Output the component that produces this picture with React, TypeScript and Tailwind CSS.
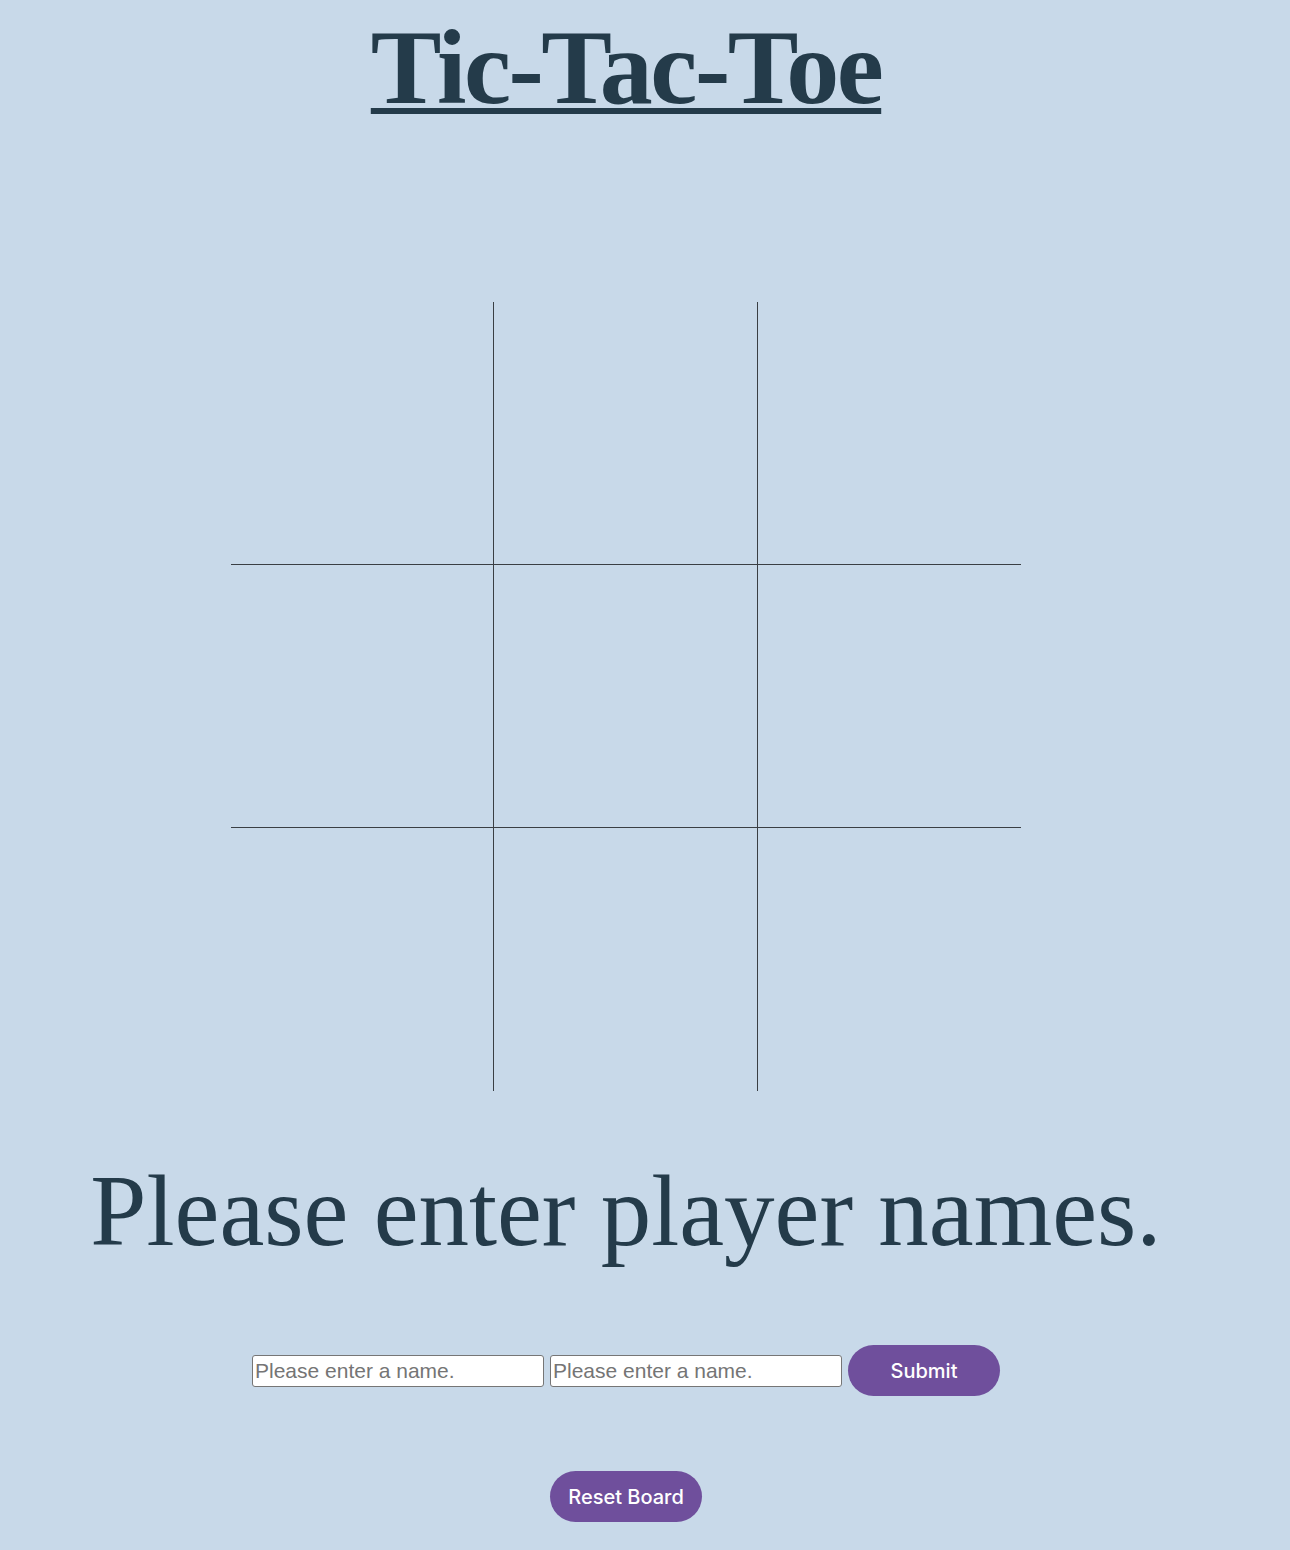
import React, { useState } from 'react';

export default function App() {
  const [board, setBoard] = useState<string[]>(Array(9).fill(''));
  const [names, setNames] = useState(['', '']);

  const cellBorder = (i: number) => {
    const col = i % 3;
    const row = Math.floor(i / 3);
    return `${col < 2 ? 'border-r' : ''} ${row < 2 ? 'border-b' : ''}`;
  };

  return (
    <div className="min-h-screen bg-[#c8d9e9] pr-[38px] flex flex-col items-center text-[#243b4a] font-['Liberation_Serif','Times_New_Roman',serif]">
      {/* Title */}
      <h1 className="pt-[15px] text-[106px] leading-[106px] font-bold tracking-[-2.5px] underline decoration-[6px] underline-offset-[5px]">
        Tic-Tac-Toe
      </h1>

      {/* Board */}
      <div className="mt-[181px] w-[790px] grid grid-cols-3">
        {board.map((v, i) => (
          <div
            key={i}
            onClick={() => {
              const next = [...board];
              next[i] = next[i] ? '' : 'X';
              setBoard(next);
            }}
            className={`h-[263px] border-[#3a3f44] flex items-center justify-center text-8xl ${cellBorder(i)}`}
          >
            {v}
          </div>
        ))}
      </div>

      {/* Status */}
      <p className="mt-[69px] text-[101px] leading-[102px] whitespace-nowrap">
        Please enter player names.
      </p>

      {/* Player form */}
      <div className="mt-[83px] flex items-center gap-[6px]">
        {names.map((n, i) => (
          <input
            key={i}
            value={n}
            onChange={(e) => {
              const next = [...names];
              next[i] = e.target.value;
              setNames(next);
            }}
            placeholder="Please enter a name."
            className="w-[292px] h-[32px] px-[2px] bg-white border border-[#767676] rounded-[3px] font-['Liberation_Sans',Arial,sans-serif] text-[21px] text-black placeholder:text-[#757575] outline-none"
          />
        ))}
        <button className="w-[152px] h-[51px] rounded-full bg-[#6f4f9c] text-white text-[20px] font-medium font-['Inter',sans-serif]">
          Submit
        </button>
      </div>

      {/* Reset */}
      <button
        onClick={() => setBoard(Array(9).fill(''))}
        className="mt-[75px] w-[152px] h-[51px] rounded-full bg-[#6f4f9c] text-white text-[20px] font-medium font-['Inter',sans-serif]"
      >
        Reset Board
      </button>
    </div>
  );
}
